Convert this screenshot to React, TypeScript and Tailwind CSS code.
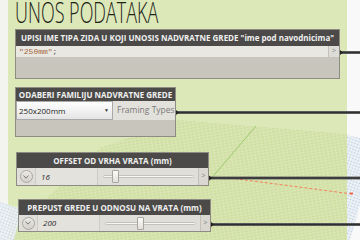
import React from "react";

function Background() {
  return (
    <svg width={360} height={240} className="absolute inset-0">
      <defs>
        <pattern id="plane" width="4" height="3" patternUnits="userSpaceOnUse" patternTransform="rotate(-10)">
          <rect width="4" height="3" fill="#d6e4ac" />
          <path d="M0 0.5 H4" stroke="#c8d99e" strokeWidth="0.7" />
          <path d="M0.5 0 V3" stroke="#dfeabf" strokeWidth="0.6" />
        </pattern>
        <pattern id="blue" width="3" height="3" patternUnits="userSpaceOnUse" patternTransform="rotate(20)">
          <rect width="3" height="3" fill="#eef2f6" />
          <circle cx="1.5" cy="1.5" r="0.8" fill="#b7cbe0" />
        </pattern>
      </defs>
      <rect x="347" y="0" width="13" height="240" fill="#f9f9f9" />
      <polygon points="347,135 360,138 360,205 350,240 347,240" fill="url(#blue)" />
      <rect x="8" y="0" width="339" height="240" fill="#dde8b9" />
      <polygon points="8,233 60,186 100,148 178,120 347,134 347,240 8,240" fill="url(#plane)" />
      <polygon points="0,202 22,209 14,240 0,240" fill="url(#blue)" opacity="0.9" />
      <line x1="256" y1="126" x2="209" y2="181" stroke="#8ec35c" strokeWidth="0.8" />
      <line x1="230" y1="178" x2="352" y2="194" stroke="#f3825c" strokeWidth="1" strokeDasharray="3 2" />
      <rect x="350" y="192.5" width="3" height="2" fill="#f06a50" />
      <g>
        <line x1="340" y1="52.5" x2="360" y2="52.5" stroke="#6a6a6a" strokeWidth="3" />
        <line x1="340" y1="52.5" x2="360" y2="52.5" stroke="#2f2f2f" strokeWidth="1.5" />
        <line x1="176" y1="112.5" x2="360" y2="112.5" stroke="#6a6a6a" strokeWidth="3" />
        <line x1="176" y1="112.5" x2="360" y2="112.5" stroke="#2f2f2f" strokeWidth="1.5" />
        <line x1="209" y1="178" x2="360" y2="178" stroke="#6a6a6a" strokeWidth="3" />
        <line x1="209" y1="178" x2="360" y2="178" stroke="#2f2f2f" strokeWidth="1.5" />
        <line x1="211" y1="224.5" x2="360" y2="224.5" stroke="#6a6a6a" strokeWidth="3" />
        <line x1="211" y1="224.5" x2="360" y2="224.5" stroke="#2f2f2f" strokeWidth="1.5" />
        <path d="M340 50 L343 52.5 L340 55 Z" fill="#222" />
        <path d="M176 110 L179 112.5 L176 115 Z" fill="#222" />
        <path d="M209 175.5 L212 178 L209 180.5 Z" fill="#222" />
        <path d="M211 222 L214 224.5 L211 227 Z" fill="#222" />
      </g>
    </svg>
  );
}

function Chevron() {
  return (
    <div className="w-[13px] h-[13px] rounded-full bg-linear-to-b from-[#eceae5] to-[#d3d0c9] border border-[#aaa79f] flex items-center justify-center">
      <svg width="6" height="4" viewBox="0 0 6 4">
        <path d="M0.5 0.5 L3 3.2 L5.5 0.5" fill="none" stroke="#7a7873" strokeWidth="1" />
      </svg>
    </div>
  );
}

function SliderRow({ value, thumb }: { value: string; thumb: number }) {
  return (
    <div className="flex-1 flex items-stretch bg-[#e0ded8]">
      <div className="w-[19px] flex items-center justify-center border-r border-[#cfccc5]">
        <Chevron />
      </div>
      <div className="w-[62px] flex items-center pl-[5px] text-[8px] italic text-[#2a2a2a] bg-[#e4e2dd] border-r border-[#cfccc5]">
        {value}
      </div>
      <div className="flex-1 relative flex items-center pl-[5px] pr-[4px]">
        <div className="flex-1 h-[3px] rounded-full bg-[#f6f6f4] border border-[#c4c1ba]" />
        <div
          className="absolute top-[2px] w-[7px] h-[13px] bg-linear-to-b from-[#fbfbfa] to-[#e2e0db] border border-[#a8a59e] rounded-[1px]"
          style={{ left: thumb }}
        />
      </div>
      <div className="w-[10px] flex items-center justify-center bg-[#d9d7d0] border-l border-[#c4c1ba] text-[7px] text-[#7d7d7d]">
        &gt;
      </div>
    </div>
  );
}

export default function App() {
  return (
    <div className="relative w-[360px] h-[240px] overflow-hidden bg-[#f3f3ef] font-['Open_Sans',sans-serif]">
      <Background />

      <div className="absolute left-[15px] top-0 text-[29px] font-light leading-[23px] text-[#1c2317] origin-left scale-x-[0.62] whitespace-nowrap">
        UNOS PODATAKA
      </div>

      <div className="absolute left-[15px] top-[29px] w-[325px] h-[50px] flex flex-col bg-[#c8c5bd] border border-[#8e8b85]">
        <div className="h-[16px] bg-[#4b4a48] flex items-center justify-center text-[8px] font-bold text-[#f0f0f0] whitespace-nowrap">
          UPISI IME TIPA ZIDA U KOJI UNOSIS NADVRATNE GREDE "ime pod navodnicima"
        </div>
        <div className="h-[11px] bg-[#e9e7e2] flex items-stretch">
          <div className="flex-1 flex items-center pl-[3px] font-['Liberation_Mono',monospace] text-[8px]">
            <span className="text-[#a5683a]">"250mm"</span>
            <span className="text-[#555]">;</span>
          </div>
          <div className="w-[11px] bg-[#dedcd6] border-l border-[#c4c1ba] flex items-center justify-center text-[7px] text-[#808080]">
            &gt;
          </div>
        </div>
      </div>

      <div className="absolute left-[15px] top-[87px] w-[161px] h-[50px] flex flex-col bg-[#c8c5bd] border border-[#8e8b85]">
        <div className="h-[13px] bg-[#4b4a48] flex items-center justify-center text-[8px] font-bold text-[#f0f0f0] whitespace-nowrap">
          ODABERI FAMILIJU NADVRATNE GREDE
        </div>
        <div className="h-[19px] flex items-stretch">
          <div className="w-[97px] bg-linear-to-b from-white to-[#e4e4e4] border border-[#a9a9a9] flex items-center pl-[2px] pr-[3px] text-[8px] text-[#222]">
            <span className="flex-1">250x200mm</span>
            <span className="text-[5px] text-[#333]">▼</span>
          </div>
          <div className="flex-1 bg-[#e3e1db] flex items-center pl-[4px] text-[8.5px] text-[#7a7a7a] whitespace-nowrap">
            Framing Types
          </div>
        </div>
      </div>

      <div className="absolute left-[16px] top-[152px] w-[193px] h-[34px] flex flex-col bg-[#c8c5bd] border border-[#8e8b85]">
        <div className="h-[15px] bg-[#4b4a48] flex items-center justify-center text-[8px] font-bold text-[#f0f0f0] whitespace-nowrap">
          OFFSET OD VRHA VRATA (mm)
        </div>
        <SliderRow value="16" thumb={14} />
      </div>

      <div className="absolute left-[18px] top-[199px] w-[193px] h-[33px] flex flex-col bg-[#c8c5bd] border border-[#8e8b85]">
        <div className="h-[15px] bg-[#4b4a48] flex items-center justify-center text-[8px] font-bold text-[#f0f0f0] whitespace-nowrap">
          PREPUST GREDE U ODNOSU NA VRATA (mm)
        </div>
        <SliderRow value="200" thumb={37} />
      </div>
    </div>
  );
}
